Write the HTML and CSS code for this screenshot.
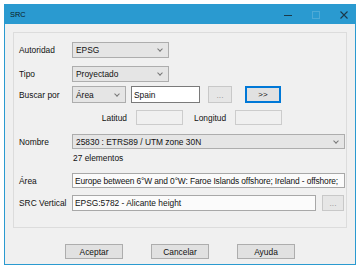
FILE: index.html
```html
<!DOCTYPE html>
<html lang="es">
<head>
  <meta charset="UTF-8" />
  <title>SRC</title>
  <link rel="stylesheet" href="styles.css">
</head>
<body>
  <div class="window">
    <div class="titlebar">
      <span class="title">SRC</span>
      <div class="controls">
        <svg class="ctl" width="10" height="10" viewBox="0 0 10 10"><path d="M1 5.5h8" stroke="#1b3a4a" stroke-width="1"/></svg>
        <svg class="ctl" width="10" height="10" viewBox="0 0 10 10"><rect x="1.5" y="1.5" width="7" height="7" fill="none" stroke="#4eaad6" stroke-width="1"/></svg>
        <svg class="ctl" width="10" height="10" viewBox="0 0 10 10"><path d="M1.5 1.5l7 7M8.5 1.5l-7 7" stroke="#1b3a4a" stroke-width="1.1"/></svg>
      </div>
    </div>

    <div class="content">
      <div class="group">
        <div class="row r1">
          <span class="label">Autoridad</span>
          <div class="combo w-short"><span>EPSG</span><i class="arrow"></i></div>
        </div>
        <div class="row r2">
          <span class="label">Tipo</span>
          <div class="combo w-short"><span>Proyectado</span><i class="arrow"></i></div>
        </div>
        <div class="row r3">
          <span class="label">Buscar por</span>
          <div class="combo w-area"><span>Área</span><i class="arrow"></i></div>
          <div class="field w-spain">Spain</div>
          <div class="btn btn-dots disabled">...</div>
          <div class="btn btn-go">&gt;&gt;</div>
        </div>
        <div class="row r4">
          <span class="label"></span>
          <span class="sublabel lat">Latitud</span>
          <div class="field off w-coord"></div>
          <span class="sublabel lon">Longitud</span>
          <div class="field off w-coord"></div>
        </div>
        <div class="row r5">
          <span class="label">Nombre</span>
          <div class="combo w-full"><span>25830 : ETRS89 / UTM zone 30N</span><i class="arrow"></i></div>
        </div>
        <div class="row r6">
          <span class="label"></span>
          <span class="count">27 elementos</span>
        </div>
        <div class="row r7">
          <span class="label">Área</span>
          <div class="field ro tight w-full">Europe between 6°W and 0°W: Faroe Islands offshore; Ireland - offshore;</div>
        </div>
        <div class="row r8">
          <span class="label">SRC Vertical</span>
          <div class="field ro w-vert">EPSG:5782 - Alicante height</div>
          <div class="btn btn-small disabled">...</div>
        </div>
      </div>

      <div class="actions">
        <div class="btn btn-main">Aceptar</div>
        <div class="btn btn-main">Cancelar</div>
        <div class="btn btn-main">Ayuda</div>
      </div>
    </div>
  </div>
</body>
</html>
```

FILE: styles.css
```css
* {
  box-sizing: border-box;
}
body {
  margin: 0;
  background: #ffffff;
  font-family: "Liberation Sans", Arial, sans-serif;
  font-size: 8.4px;
  color: #111;
}
.window {
  margin: 4px 0 0 4px;
  width: 352px;
  height: 261px;
  border: 1px solid #2a9ad0;
  background: #f0f0f0;
  display: flex;
  flex-direction: column;
}
.titlebar {
  height: 19px;
  background: #2a9ad0;
  display: flex;
  align-items: center;
  justify-content: space-between;
  padding: 0 6px 0 5px;
}
.title {
  font-size: 7.4px;
  color: #0b1a22;
}
.controls {
  display: flex;
  gap: 18px;
  align-items: center;
}
.ctl {
  display: block;
}
.content {
  padding: 8px 0 0 8px;
}
.group {
  width: 334px;
  height: 196px;
  border: 1px solid #dcdcdc;
  padding: 9px 0 0 5px;
}
.row {
  display: flex;
  align-items: center;
}
.label {
  width: 53px;
  flex: none;
}
.r1 { height: 16px; }
.r2 { height: 16px; margin-top: 8px; }
.r3 { height: 17px; margin-top: 4px; }
.r4 { height: 15px; margin-top: 7px; }
.r5 { height: 15px; margin-top: 9px; }
.r6 { height: 10px; margin-top: 4px; }
.r7 { height: 15px; margin-top: 10px; }
.r8 { height: 16px; margin-top: 7px; }

.combo {
  height: 100%;
  background: #e5e5e5;
  border: 1px solid #adadad;
  display: flex;
  align-items: center;
  justify-content: space-between;
  padding: 0 6px 0 3px;
}
.arrow {
  width: 4px;
  height: 4px;
  border-right: 1px solid #777;
  border-bottom: 1px solid #777;
  transform: rotate(45deg);
  margin-top: -2px;
}
.w-short { width: 97px; }
.w-area { width: 54px; }
.w-full { width: 273px; }
.w-spain { width: 69px; margin-left: 5px; }
.w-vert { width: 244px; }
.w-coord { width: 47px; }

.field {
  height: 100%;
  background: #fff;
  border: 1px solid #7a7a7a;
  padding: 0 2px;
  display: flex;
  align-items: center;
  white-space: nowrap;
  overflow: hidden;
}
.field.ro {
  border-color: #a8a8a8;
  background: #fbfbfb;
}
.field.tight {
  letter-spacing: -0.12px;
}
.field.off {
  background: #f0f0f0;
  border-color: #cccccc;
}
.sublabel.lat {
  width: 55px;
  text-align: right;
  margin-right: 9px;
}
.sublabel.lon {
  margin: 0 9px 0 11px;
}
.count {
  padding-left: 1px;
}

.btn {
  height: 100%;
  background: #e1e1e1;
  border: 1px solid #adadad;
  display: flex;
  align-items: center;
  justify-content: center;
}
.btn.disabled {
  color: #a0a0a0;
  background: #e6e6e6;
  border-color: #c8c8c8;
}
.btn-dots {
  width: 24px;
  margin-left: 8px;
}
.btn-go {
  width: 36px;
  margin-left: 13px;
  border: 2px solid #0078d7;
  font-size: 8px;
}
.btn-small {
  width: 22px;
  margin-left: 6px;
}
.actions {
  display: flex;
  justify-content: center;
  gap: 28px;
  margin-top: 16px;
  padding-right: 8px;
}
.btn-main {
  width: 58px;
  height: 15px;
}
```
